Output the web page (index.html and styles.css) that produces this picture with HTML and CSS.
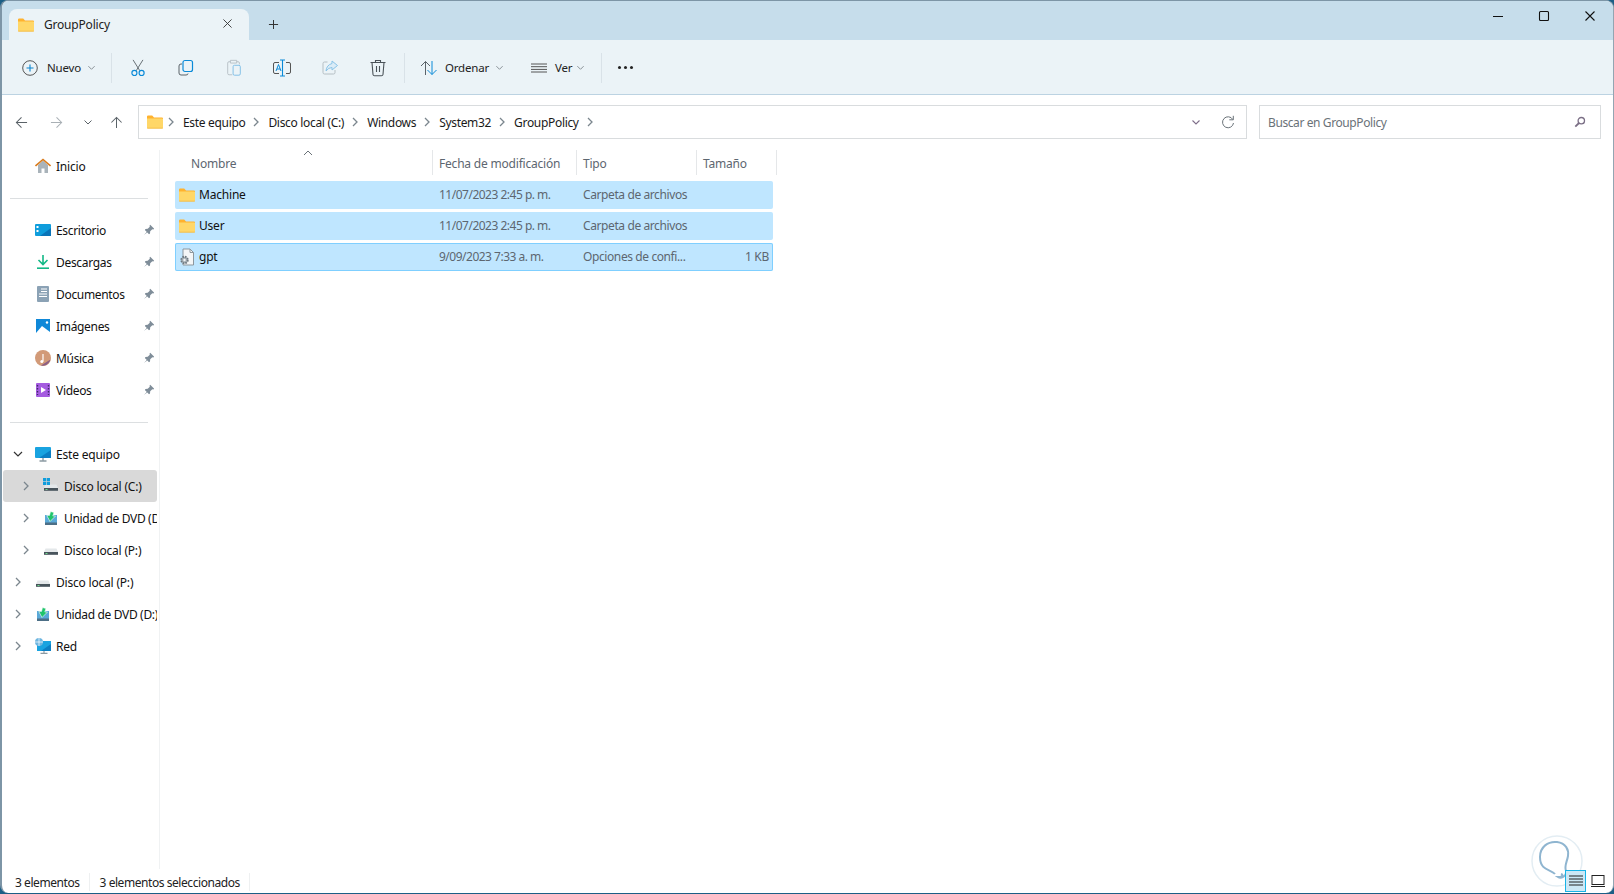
FILE: index.html
```html
<!DOCTYPE html>
<html lang="es">
<head>
<meta charset="utf-8">
<title>GroupPolicy</title>
<link rel="stylesheet" href="styles.css">
</head>
<body>
<svg class="defs" width="0" height="0">
  <defs>
    <symbol id="folder" viewBox="0 0 16 14">
      <path d="M0 1.600Q0 .5 1.100 .5H5.200L7 2.400H15Q16 2.400 16 3.400V4H0Z" fill="#ffb22e"/>
      <path d="M0 3.600H15Q16 3.600 16 4.600V12.600Q16 13.600 15 13.600H1Q0 13.600 0 12.600Z" fill="#ffd768"/>
      <path d="M0 12.700H16Q16 13.600 15 13.600H1Q0 13.600 0 12.700Z" fill="#f2b63e"/>
    </symbol>
    <symbol id="drive" viewBox="0 0 16 16">
      <path d="M2.500 6.500H13.500L15 10V12.500H1V10Z" fill="#e4e8ea"/>
      <rect x="1" y="10" width="14" height="2.800" fill="#48545c"/>
      <rect x="2.500" y="11" width="2" height="1" fill="#6fe08c"/>
    </symbol>
    <symbol id="dvd" viewBox="0 0 16 16">
      <path d="M2 5H14V15H2Z" fill="#5aa9d8"/>
      <path d="M2 12.500H14V15H2Z" fill="#4d6f86"/>
      <path d="M7.500 1.500L11 2.500 9.800 6H12.500L7 11.500 3.800 5.500H6.500Z" fill="#1fc46b" stroke="#fff" stroke-width=".6"/>
    </symbol>
    <symbol id="pin" viewBox="0 0 12 12">
      <path d="M7.200 .8L11.200 4.800 10.300 5.500 9.300 5.200 7.200 7.300 7 9.600 6 10.200 1.800 6 2.500 5 4.700 4.800 6.800 2.700 6.500 1.700ZM3.700 7.900L1 11 4.200 8.400Z" fill="#7f8d99"/>
    </symbol>
    <symbol id="chev-r" viewBox="0 0 10 10">
      <path d="M3 1L7 5 3 9" fill="none" stroke="#7b868e" stroke-width="1.300"/>
    </symbol>
    <symbol id="chev-d" viewBox="0 0 10 10">
      <path d="M1.500 3.500L5 7 8.500 3.500" fill="none" stroke="currentColor" stroke-width="1.100"/>
    </symbol>
  </defs>
</svg>

<div class="window">
  <header class="titlebar">
    <div class="tab">
      <svg class="tab-folder"><use href="#folder"/></svg>
      <span class="tab-name">GroupPolicy</span>
      <svg class="tab-close" viewBox="0 0 10 10"><path d="M.5 .5L9.500 9.500M9.500 .5L.5 9.500" stroke="#333" stroke-width="1" fill="none"/></svg>
    </div>
    <svg class="tab-new" viewBox="0 0 12 12"><path d="M6 1V11M1 6H11" stroke="#333" stroke-width="1.100" fill="none"/></svg>
    <div class="caption">
      <svg class="cap-btn" viewBox="0 0 12 12"><path d="M1 6.500H11" stroke="#111" stroke-width="1.100" fill="none"/></svg>
      <svg class="cap-btn" viewBox="0 0 12 12"><rect x="1.500" y="1.500" width="9" height="9" rx="1" stroke="#111" stroke-width="1.100" fill="none"/></svg>
      <svg class="cap-btn" viewBox="0 0 12 12"><path d="M1.500 1.500L10.500 10.500M10.500 1.500L1.500 10.500" stroke="#111" stroke-width="1.100" fill="none"/></svg>
    </div>
  </header>

  <div class="toolbar">
    <div class="tool tool-new">
      <svg class="tico" viewBox="0 0 18 18"><circle cx="9" cy="9" r="7.300" fill="none" stroke="#555" stroke-width="1"/><path d="M9 5.500V12.500M5.500 9H12.500" stroke="#0a84d0" stroke-width="1.100"/></svg>
      <span class="tool-label">Nuevo</span>
      <svg class="mini"><use href="#chev-d"/></svg>
    </div>
    <span class="tsep"></span>
    <div class="tool-ico tool-first"><svg class="tico" viewBox="0 0 18 20"><path d="M3.500 1L11 13M14.500 1L7 13" stroke="#5a6268" stroke-width="1" fill="none"/><circle cx="5" cy="15.500" r="2.800" fill="none" stroke="#0a8ad8" stroke-width="1.300"/><circle cx="13" cy="15.500" r="2.800" fill="none" stroke="#0a8ad8" stroke-width="1.300"/></svg></div>
    <div class="tool-ico"><svg class="tico" viewBox="0 0 18 18"><rect x="6" y="1.500" width="9.500" height="11" rx="2" fill="none" stroke="#0a8ad8" stroke-width="1.200"/><path d="M5 5H4Q2 5 2 7V14Q2 16 4 16H9Q11 16 11 14.500" fill="none" stroke="#5a6268" stroke-width="1"/></svg></div>
    <div class="tool-ico dim"><svg class="tico" viewBox="0 0 18 20"><path d="M5 3H3.500Q2 3 2 4.500V16Q2 17.500 3.500 17.500H7M12 3H13.500Q15 3 15 4.500V6M5 1.500H12V4.500H5Z" fill="none" stroke="#8b959c" stroke-width="1"/><rect x="8" y="7" width="8" height="11" rx="1.500" fill="none" stroke="#1d8fd8" stroke-width="1"/></svg></div>
    <div class="tool-ico"><svg class="tico wide" viewBox="0 0 20 18"><path d="M7 3.500H3Q1.500 3.500 1.500 5V13Q1.500 14.500 3 14.500H7M14 3.500H17Q18.500 3.500 18.500 5V13Q18.500 14.500 17 14.500H14" fill="none" stroke="#555" stroke-width="1"/><path d="M8 1H13M10.500 1V17M8 17H13" fill="none" stroke="#0a8ad8" stroke-width="1.100"/><path d="M4 12L6.500 5.500 9 12M5 10H8" fill="none" stroke="#0a8ad8" stroke-width="1"/></svg></div>
    <div class="tool-ico dim"><svg class="tico" viewBox="0 0 18 18"><path d="M6.500 3H3.500Q2 3 2 4.500V13.500Q2 15 3.500 15H12.500Q14 15 14 13.500V11" fill="none" stroke="#8b959c" stroke-width="1"/><path d="M11 2L16.500 6.500 11 11V8.500Q7.500 8.500 5 12 5.500 6 11 4.500Z" fill="#cfe7f7" stroke="#3a9ddd" stroke-width="1"/></svg></div>
    <div class="tool-ico"><svg class="tico" viewBox="0 0 18 18"><path d="M1.500 3.500H16.500M6.500 3.500V1.500H11.500V3.500M3 3.500L4 15.500Q4.200 16.800 5.500 16.800H12.500Q13.800 16.800 14 15.500L15 3.500M7.500 7V13M10.500 7V13" fill="none" stroke="#4a5258" stroke-width="1.100"/></svg></div>
    <span class="tsep tsep-sort"></span>
    <div class="tool tool-sort">
      <svg class="tico" viewBox="0 0 18 16"><path d="M5.500 15V1.500M1 6L5.500 1.500 10 6" fill="none" stroke="#5a6268" stroke-width="1"/><path d="M12 1V14.500M7.500 10L12 14.500 16.500 10" fill="none" stroke="#0a8ad8" stroke-width="1"/></svg>
      <span class="tool-label">Ordenar</span>
      <svg class="mini"><use href="#chev-d"/></svg>
    </div>
    <div class="tool tool-view">
      <svg class="tico" viewBox="0 0 16 10"><path d="M0 1H16M0 3.700H16M0 6.400H16M0 9H16" stroke="#555" stroke-width="1" fill="none"/></svg>
      <span class="tool-label">Ver</span>
      <svg class="mini"><use href="#chev-d"/></svg>
    </div>
    <span class="tsep"></span>
    <div class="dots"><i></i><i></i><i></i></div>
  </div>

  <div class="addressrow">
    <div class="navs">
      <svg class="nav" viewBox="0 0 14 14"><path d="M13 7H1.500M7 1.500L1.500 7 7 12.500" fill="none" stroke="#5a6268" stroke-width="1.100"/></svg>
      <svg class="nav" viewBox="0 0 14 14"><path d="M1 7H12.500M7 1.500L12.500 7 7 12.500" fill="none" stroke="#a9b0b5" stroke-width="1.100"/></svg>
      <svg class="nav nav-s" viewBox="0 0 10 10"><path d="M1.500 3.500L5 7 8.500 3.500" fill="none" stroke="#5a6268" stroke-width="1"/></svg>
      <svg class="nav" viewBox="0 0 14 14"><path d="M7 13V1.500M1.500 7L7 1.500 12.500 7" fill="none" stroke="#5a6268" stroke-width="1.100"/></svg>
    </div>
    <div class="addressbox">
      <svg class="addr-folder"><use href="#folder"/></svg>
      <svg class="crumb-sep"><use href="#chev-r"/></svg><span class="crumb">Este equipo</span>
      <svg class="crumb-sep"><use href="#chev-r"/></svg><span class="crumb">Disco local (C:)</span>
      <svg class="crumb-sep"><use href="#chev-r"/></svg><span class="crumb">Windows</span>
      <svg class="crumb-sep"><use href="#chev-r"/></svg><span class="crumb">System32</span>
      <svg class="crumb-sep"><use href="#chev-r"/></svg><span class="crumb">GroupPolicy</span>
      <svg class="crumb-sep"><use href="#chev-r"/></svg>
      <svg class="addr-drop"><use href="#chev-d"/></svg>
      <svg class="addr-refresh" viewBox="0 0 14 14"><path d="M11.800 4.500A5.500 5.500 0 1 0 12.500 8" fill="none" stroke="#6a7278" stroke-width="1"/><path d="M12.300 .8V4.800H8.300" fill="none" stroke="#6a7278" stroke-width="1"/></svg>
    </div>
    <div class="searchbox">
      <span class="search-text">Buscar en GroupPolicy</span>
      <svg class="search-ico" viewBox="0 0 12 12"><circle cx="7.300" cy="4.700" r="3.200" fill="none" stroke="#7b6f86" stroke-width="1.300"/><path d="M5 7L1.300 10.700" stroke="#7b6f86" stroke-width="1.800"/></svg>
    </div>
  </div>

  <div class="body">
    <nav class="sidebar">
      <div class="nitem">
        <span class="nexp"></span>
        <svg class="nico" viewBox="0 0 16 16"><path d="M3 7V15H6.500V10.500H9.500V15H13V7L8 2.500Z" fill="#a9b3ba"/><path d="M.5 8L8 1.500 15.500 8" fill="none" stroke="#d97b1c" stroke-width="1.600"/></svg>
        <span class="nlabel">Inicio</span>
      </div>
      <hr class="ndiv">
      <div class="nitem quick">
        <span class="nexp"></span>
        <svg class="nico" viewBox="0 0 16 16"><rect y="2" width="16" height="12" rx="1" fill="#0f9ddc"/><path d="M16 6V14H5Z" fill="#0a74b8"/><rect x="1.500" y="4" width="2" height="2" fill="#fff"/><rect x="1.500" y="8" width="2" height="2" fill="#fff"/></svg>
        <span class="nlabel">Escritorio</span><svg class="npin"><use href="#pin"/></svg>
      </div>
      <div class="nitem quick">
        <span class="nexp"></span>
        <svg class="nico" viewBox="0 0 16 16"><path d="M8 1V10M3.500 6L8 10.500 12.500 6" fill="none" stroke="#12b886" stroke-width="1.600"/><path d="M2 14.200H14" stroke="#12b886" stroke-width="1.600"/></svg>
        <span class="nlabel">Descargas</span><svg class="npin"><use href="#pin"/></svg>
      </div>
      <div class="nitem quick">
        <span class="nexp"></span>
        <svg class="nico" viewBox="0 0 16 16"><rect x="2" y="0" width="12" height="16" rx="1" fill="#8ba2b5"/><path d="M6 3H12M6 5.500H12M4 8H12M4 10.500H12" stroke="#fff" stroke-width="1"/></svg>
        <span class="nlabel">Documentos</span><svg class="npin"><use href="#pin"/></svg>
      </div>
      <div class="nitem quick">
        <span class="nexp"></span>
        <svg class="nico" viewBox="0 0 16 16"><rect x="1" y="1" width="14" height="14" fill="#0f88d8"/><path d="M1 15L7 8 15 14V15Z" fill="#fff"/><circle cx="12" cy="4.500" r="1.200" fill="#fff"/></svg>
        <span class="nlabel">Imágenes</span><svg class="npin"><use href="#pin"/></svg>
      </div>
      <div class="nitem quick">
        <span class="nexp"></span>
        <svg class="nico" viewBox="0 0 16 16"><circle cx="8" cy="8" r="8" fill="#d29a78"/><path d="M6 15.500L15.500 9.500A8 8 0 0 1 6 15.500Z" fill="#8b5f86"/><path d="M8 4V11.500" stroke="#fff" stroke-width="1.200"/><circle cx="6.800" cy="11.500" r="1.500" fill="#fff"/></svg>
        <span class="nlabel">Música</span><svg class="npin"><use href="#pin"/></svg>
      </div>
      <div class="nitem quick">
        <span class="nexp"></span>
        <svg class="nico" viewBox="0 0 16 16"><rect x="1" y="1" width="14" height="14" rx="1" fill="#a55be0"/><path d="M6 5V11L11 8Z" fill="#fff"/><path d="M2.500 3V13M13.500 3V13" stroke="#3d2a66" stroke-width="1.400" stroke-dasharray="1.500 1.500"/></svg>
        <span class="nlabel">Videos</span><svg class="npin"><use href="#pin"/></svg>
      </div>
      <hr class="ndiv">
      <div class="nitem">
        <svg class="nexp-open" viewBox="0 0 10 10"><path d="M1 3L5 7 9 3" fill="none" stroke="#333" stroke-width="1.200"/></svg>
        <svg class="nico" viewBox="0 0 16 16"><rect y="1" width="16" height="11" rx="1" fill="#19a3e0"/><path d="M16 4V12H4Z" fill="#0b7fc4"/><path d="M8 12V14.500M4.500 15H11.500" stroke="#8c9aa3" stroke-width="1.400"/></svg>
        <span class="nlabel">Este equipo</span>
      </div>
      <div class="nitem child active">
        <svg class="nexp-c"><use href="#chev-r"/></svg>
        <svg class="nico" viewBox="0 0 16 16"><use href="#drive"/><rect x="0" y="0" width="3.200" height="3.200" fill="#0f9ddc"/><rect x="3.800" y="0" width="3.200" height="3.200" fill="#0f9ddc"/><rect x="0" y="3.800" width="3.200" height="3.200" fill="#0f9ddc"/><rect x="3.800" y="3.800" width="3.200" height="3.200" fill="#0f9ddc"/></svg>
        <span class="nlabel">Disco local (C:)</span>
      </div>
      <div class="nitem child tight">
        <svg class="nexp-c"><use href="#chev-r"/></svg>
        <svg class="nico"><use href="#dvd"/></svg>
        <span class="nlabel">Unidad de DVD (D:)</span>
      </div>
      <div class="nitem child">
        <svg class="nexp-c"><use href="#chev-r"/></svg>
        <svg class="nico"><use href="#drive"/></svg>
        <span class="nlabel">Disco local (P:)</span>
      </div>
      <div class="nitem">
        <svg class="nexp-c"><use href="#chev-r"/></svg>
        <svg class="nico"><use href="#drive"/></svg>
        <span class="nlabel">Disco local (P:)</span>
      </div>
      <div class="nitem tight">
        <svg class="nexp-c"><use href="#chev-r"/></svg>
        <svg class="nico"><use href="#dvd"/></svg>
        <span class="nlabel">Unidad de DVD (D:)</span>
      </div>
      <div class="nitem">
        <svg class="nexp-c"><use href="#chev-r"/></svg>
        <svg class="nico" viewBox="0 0 16 16"><rect x="2" y="3" width="14" height="10" fill="#19a3e0"/><path d="M16 6V13H6Z" fill="#0b7fc4"/><path d="M9 13V15M5.500 15.300H12.500" stroke="#8c9aa3" stroke-width="1.200"/><circle cx="4" cy="4" r="4" fill="#6fb6e0"/><path d="M0 4H8M4 0V8" stroke="#fff" stroke-width=".7"/></svg>
        <span class="nlabel">Red</span>
      </div>
    </nav>

    <main class="content">
      <div class="thead">
        <div class="th th-name">Nombre<svg class="sort-caret" viewBox="0 0 10 6"><path d="M1 5L5 1 9 5" fill="none" stroke="#6a7278" stroke-width="1"/></svg></div>
        <div class="th">Fecha de modificación</div>
        <div class="th">Tipo</div>
        <div class="th">Tamaño</div>
      </div>
      <div class="rows">
        <div class="row">
          <div class="cell cell-name"><svg class="ficon"><use href="#folder"/></svg>Machine</div>
          <div class="cell cell-date">11/07/2023 2:45 p. m.</div>
          <div class="cell cell-type">Carpeta de archivos</div>
          <div class="cell"></div>
        </div>
        <div class="row">
          <div class="cell cell-name"><svg class="ficon"><use href="#folder"/></svg>User</div>
          <div class="cell cell-date">11/07/2023 2:45 p. m.</div>
          <div class="cell cell-type">Carpeta de archivos</div>
          <div class="cell"></div>
        </div>
        <div class="row focused">
          <div class="cell cell-name">
            <svg class="ficon ficon-doc" viewBox="0 0 16 18"><path d="M4 1H11L14.500 4.500V17H4Z" fill="#f4f6f7" stroke="#8d979e" stroke-width="1"/><path d="M11 1V4.500H14.500" fill="none" stroke="#8d979e" stroke-width="1"/><circle cx="5.500" cy="12" r="3.300" fill="#a7b0b6" stroke="#6f7a82" stroke-width="1.800" stroke-dasharray="1.600 1"/><circle cx="5.500" cy="12" r="1.200" fill="#f4f6f7"/></svg>gpt
          </div>
          <div class="cell cell-date">9/09/2023 7:33 a. m.</div>
          <div class="cell cell-type">Opciones de confi...</div>
          <div class="cell cell-size">1 KB</div>
        </div>
      </div>
    </main>
  </div>

  <footer class="statusbar">
    <span class="st">3 elementos</span>
    <span class="st-sep"></span>
    <span class="st">3 elementos seleccionados</span>
    <span class="st-sep"></span>
    <div class="views">
      <div class="view on"><svg viewBox="0 0 14 12"><path d="M0 1H14M0 4H14M0 7H14M0 10H14" stroke="#222" stroke-width="1"/></svg></div>
      <div class="view"><svg viewBox="0 0 14 12"><rect x="1" y=".5" width="12" height="9" fill="none" stroke="#222" stroke-width="1"/><path d="M0 11.500H14" stroke="#222" stroke-width="1"/></svg></div>
    </div>
  </footer>

  <svg class="watermark" viewBox="0 0 52 52"><circle cx="26" cy="26" r="25" fill="#fff" fill-opacity=".6" stroke="#e3edf3" stroke-width="1.500"/><path d="M24 39C20 34 9 36 9 22 9 12 17 6 26 7 35 8 38 15 37 21 36 27 33 31 35 36 36 41 30 44 27 42 31 42 33 40 30 39" fill="none" stroke="#8fb5d0" stroke-width="2"/></svg>
</div>
</body>
</html>
```

FILE: styles.css
```css
* { box-sizing: border-box; }
html, body { margin: 0; height: 100%; }
body {
  width: 1614px;
  height: 894px;
  overflow: hidden;
  background: #1c5f86;
  font-family: "Noto Sans", "Open Sans", sans-serif;
  font-size: 12px;
  letter-spacing: -0.2px;
  color: #1a1a1a;
}
.defs { position: absolute; }
.window {
  position: relative;
  width: 1614px;
  height: 893px;
  display: flex;
  flex-direction: column;
  background: #fff;
  border-left: 2px solid #7d95a6;
  border-right: 1px solid #93a5b2;
  border-top: 1px solid #7d95a6;
  border-radius: 8px;
  overflow: hidden;
}
.window::before {
  content: "";
  position: absolute;
  left: 840px;
  top: -1px;
  width: 190px;
  height: 1px;
  background: #0a94cf;
}

/* title bar */
.titlebar {
  height: 39px;
  flex: none;
  display: flex;
  align-items: flex-end;
  background: #c6ddeb;
  padding-left: 7px;
}
.tab {
  width: 240px;
  height: 31px;
  display: flex;
  align-items: center;
  background: #ebf3f7;
  border-radius: 8px 8px 0 0;
  padding-left: 9px;
  padding-right: 17px;
}
.tab-folder { width: 16px; height: 14px; margin-right: 10px; }
.tab-name { flex: 1; color: #222; font-size: 12px; }
.tab-close { width: 9px; height: 9px; margin-top: -3px; }
.tab-new { width: 11px; height: 11px; margin: 0 0 10px 19px; }
.caption {
  margin-left: auto;
  align-self: flex-start;
  display: flex;
  gap: 34px;
  padding: 9px 17px 0 0;
}
.cap-btn { width: 12px; height: 12px; }

/* toolbar */
.toolbar {
  height: 55px;
  flex: none;
  display: flex;
  align-items: center;
  background: #ebf3f7;
  border-bottom: 1px solid #bcd3e2;
  padding-left: 19px;
  padding-top: 1px;
}
.tico { width: 18px; height: 18px; flex: none; }
.tico.wide { width: 20px; }
.tool { display: flex; align-items: center; color: #222; flex: none; }
.tool-label { margin-left: 8px; font-size: 11.5px; }
.mini { width: 9px; height: 9px; margin-left: 6px; color: #8a9298; }
.tool-new { width: 90px; }
.tsep { width: 1px; height: 30px; background: #d9e2e8; flex: none; }
.tool-ico { width: 48px; display: flex; justify-content: center; flex: none; }
.tool-first { margin-left: 2px; }
.tool-ico.dim .tico { opacity: .55; }
.tsep-sort { margin-left: 2px; }
.tool-sort { width: 111px; margin-left: 15px; }
.tool-sort .tool-label { margin-left: 7px; }
.tool-view { width: 70px; }
.tool-view .tico { width: 16px; height: 10px; }
.tool-view .tool-label { margin-left: 8px; }
.tool-view .mini { margin-left: 4px; }
.dots { display: flex; gap: 3px; margin-left: 16px; }
.dots i { width: 3px; height: 3px; border-radius: 50%; background: #222; }

/* address row */
.addressrow {
  height: 55px;
  flex: none;
  display: flex;
  align-items: center;
  padding-bottom: 1px;
}
.navs { width: 136px; display: flex; align-items: center; padding-left: 13px; }
.nav { width: 13px; height: 13px; margin-right: 22px; flex: none; }
.nav-s { width: 10px; height: 10px; margin-right: 17px; margin-left: -2px; }
.addressbox {
  width: 1109px;
  height: 34px;
  display: flex;
  align-items: center;
  border: 1px solid #d9dcde;
  padding-left: 8px;
}
.addr-folder { width: 16px; height: 14px; margin-right: 3px; flex: none; }
.crumb-sep { width: 10px; height: 10px; flex: none; }
.crumb { margin: 0 6px 0 7px; color: #1a1a1a; white-space: nowrap; letter-spacing: -0.32px; }
.addr-drop { width: 10px; height: 10px; margin-left: auto; color: #7f6f8a; }
.addr-refresh { width: 14px; height: 14px; margin: 0 11px 0 20px; }
.searchbox {
  width: 342px;
  height: 34px;
  margin-left: 12px;
  display: flex;
  align-items: center;
  justify-content: space-between;
  border: 1px solid #d9dcde;
  padding: 0 14px 0 8px;
}
.search-text { color: #6a7278; letter-spacing: -0.4px; }
.search-ico { width: 12px; height: 12px; }

/* body */
.body { flex: 1; min-height: 0; display: flex; }
.sidebar {
  width: 158px;
  flex: none;
  height: 100%;
  padding: 0 0 0 1px;
  border-right: 1px solid #f0f2f3;
  overflow: hidden;
  white-space: nowrap;
}
.nitem {
  height: 32px;
  width: 154px;
  display: flex;
  align-items: center;
  border-radius: 3px;
  overflow: hidden;
  color: #111;
}
.quick { letter-spacing: -0.32px; }
.tight { letter-spacing: -0.34px; }
.nexp { width: 32px; flex: none; }
.nexp-open { width: 10px; height: 10px; margin: 0 12px 0 10px; flex: none; }
.nexp-c { width: 10px; height: 10px; margin: 0 12px 0 10px; flex: none; }
.nico { width: 16px; height: 16px; flex: none; margin-right: 5px; }
.nlabel { flex: 1; }
.npin { width: 12px; height: 12px; margin-right: 2px; flex: none; }
.child { padding-left: 8px; }
.active { background: #d9d9d9; }
.ndiv {
  width: 138px;
  height: 1px;
  margin: 16px 0 15px 7px;
  border: 0;
  background: #dcdfe1;
}

/* list */
.content { flex: 1; padding: 0 0 0 15px; }
.thead {
  height: 25px;
  display: grid;
  grid-template-columns: 258px 144px 120px 80px;
}
.th {
  position: relative;
  display: flex;
  align-items: center;
  padding: 1px 0 0 6px;
  border-right: 1px solid #e5e7e9;
  color: #5d6670;
}
.th-name { padding-left: 16px; }
.sort-caret { position: absolute; left: 128px; top: 0; width: 10px; height: 6px; }
.rows { margin-top: 6px; display: flex; flex-direction: column; gap: 3px; width: 598px; }
.row {
  height: 28px;
  display: grid;
  grid-template-columns: 258px 144px 120px 76px;
  align-items: center;
  padding-bottom: 1px;
  background: #bfe6ff;
  border-radius: 2px;
  color: #5d6670;
}
.focused { box-shadow: inset 0 0 0 1px #7fcfff; }
.cell { padding-left: 6px; white-space: nowrap; overflow: hidden; }
.cell-date { letter-spacing: -0.5px; }
.cell-type { letter-spacing: -0.4px; }
.cell-name { display: flex; align-items: center; padding-left: 4px; color: #111; }
.ficon { width: 16px; height: 14px; margin-right: 4px; flex: none; }
.ficon-doc { height: 18px; }
.cell-size { text-align: right; padding-right: 4px; letter-spacing: -0.3px; }

/* status */
.statusbar {
  height: 24px;
  flex: none;
  display: flex;
  align-items: center;
  padding: 2px 0 0 13px;
  color: #222;
  letter-spacing: -0.44px;
}
.st-sep { width: 1px; height: 18px; background: #eef0f1; margin: 0 9.500px; }
.views { margin-left: auto; display: flex; padding-right: 5px; gap: 1px; position: relative; z-index: 1; margin-top: -2px; }
.view { width: 21px; height: 22px; display: flex; align-items: center; justify-content: center; }
.view svg { width: 14px; height: 12px; }
.view.on { background: #cce8f6; border: 1px solid #19b3e6; }
.watermark {
  position: absolute;
  right: 30px;
  bottom: 6px;
  width: 52px;
  height: 52px;
}
```
